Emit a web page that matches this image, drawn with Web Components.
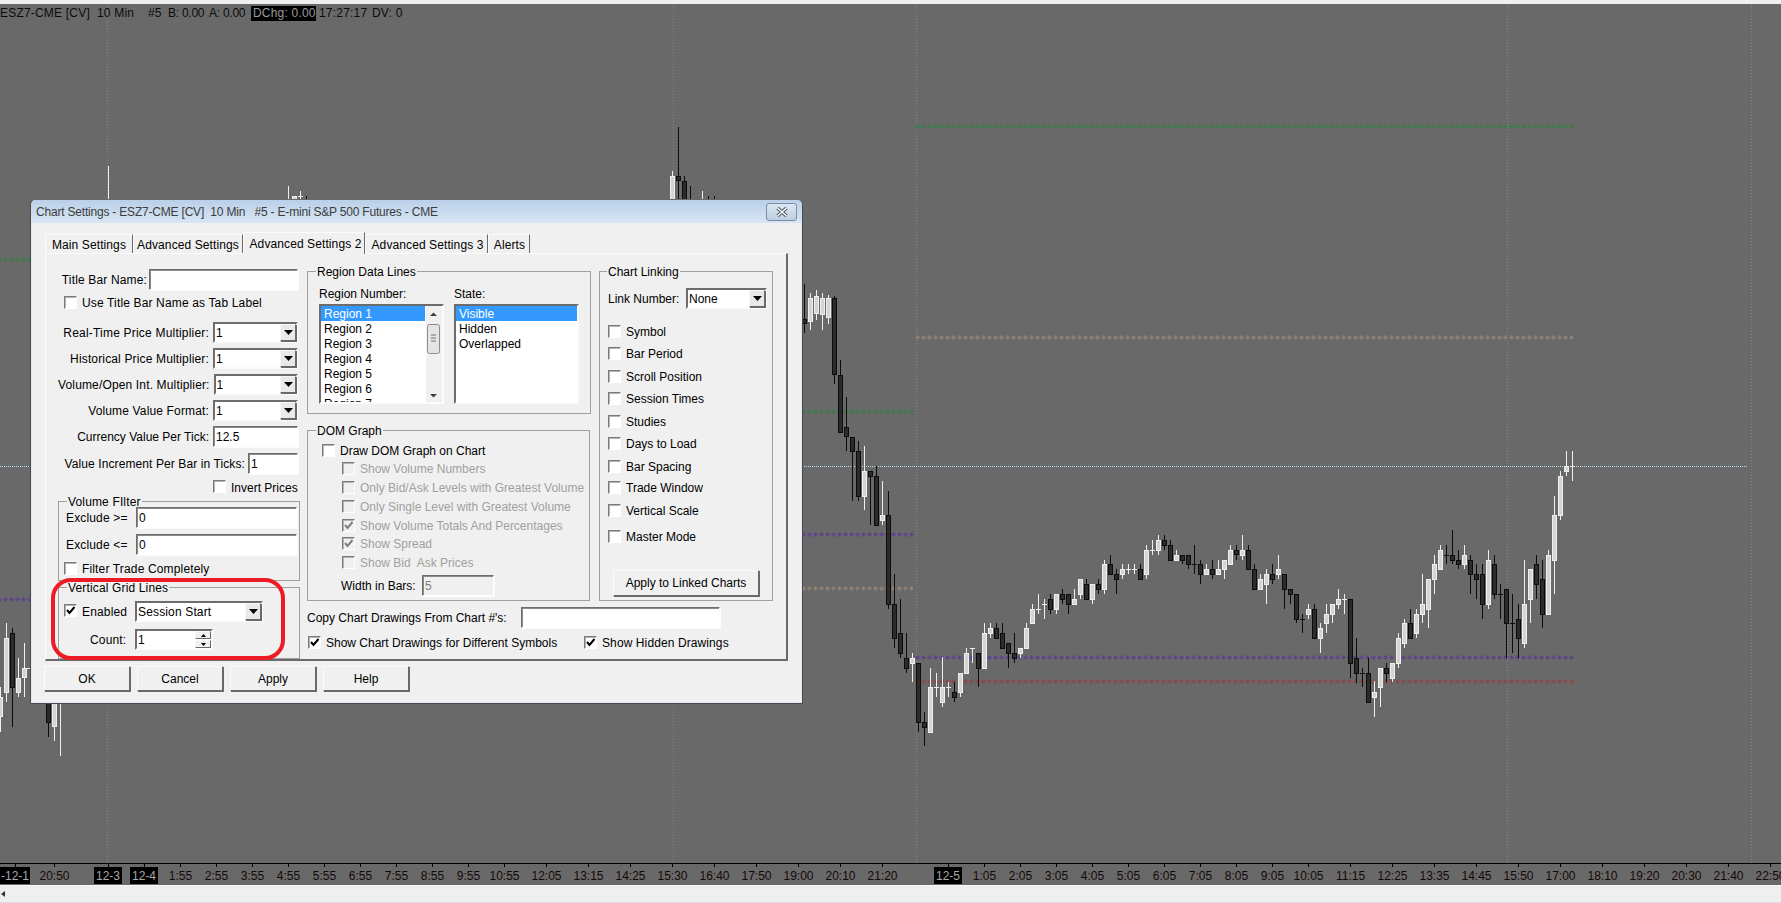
<!DOCTYPE html>
<html lang="en">
<head>
<meta charset="utf-8">
<title>Chart Settings</title>
<style>
  html, body { margin: 0; height: 100%; overflow: hidden; background: #696969; }
</style>
</head>
<body>
<sc-app></sc-app>
<script>
const UI_FONT = '12px/14px "Liberation Sans", Arial, sans-serif'

/**
 * Small helper that makes a shadow root from a html string.
 *
 * @param {HTMLElement} el - The host element.
 * @param {string} html - Markup with styles.
 */
function shadow (el, html) {
  // the hosts use white-space: pre, so the blanks between tags must not become text
  el.attachShadow({ mode: 'open' }).innerHTML = html.trim().replace(/>\s+</g, '><')
}

customElements.define('sc-check', class extends HTMLElement {
  constructor () {
    super()
    const on = this.hasAttribute('checked')
    const off = this.hasAttribute('disabled')
    shadow(this, `
      <style>
        :host { display: flex; align-items: center; height: 14px; color: ${off ? '#a0a0a0' : '#000'}; white-space: pre; }
        .box {
          box-sizing: border-box; flex: none; width: 13px; height: 13px; margin-right: 5px; margin-top: -2px;
          background: ${off ? '#f0f0f0' : '#fff'};
          border: 1px solid; border-color: #7a7a7a #fff #fff #7a7a7a;
          box-shadow: inset 1px 1px 0 #b4b4b4;
        }
        svg { display: block; margin: 1px; }
      </style>
      <span class="box">${on ? `<svg width="10" height="9" viewBox="0 0 10 9"><path d="M1 4l2.5 3L8.500 1" fill="none" stroke="${off ? '#808080' : '#000'}" stroke-width="2"/></svg>` : ''}</span>
      <slot></slot>
    `)
  }
})

customElements.define('sc-input', class extends HTMLElement {
  constructor () {
    super()
    const off = this.hasAttribute('disabled')
    shadow(this, `
      <style>
        :host {
          display: block; box-sizing: border-box; height: 21px; padding: 2px 2px;
          background: ${off ? '#f0f0f0' : '#fff'}; color: ${off ? '#808080' : '#000'};
          border: 1px solid; border-color: #6d6d6d #fff #fff #6d6d6d;
          box-shadow: inset 1px 1px 0 #8a8a8a, 1px 1px 0 #fbfbfb;
          line-height: 16px; white-space: pre; overflow: hidden; letter-spacing: 0;
        }
      </style>
      <slot></slot>
    `)
  }
})

customElements.define('sc-combo', class extends HTMLElement {
  constructor () {
    super()
    shadow(this, `
      <style>
        :host {
          display: flex; box-sizing: border-box; height: 21px; background: #fff;
          border: 2px solid; border-color: #6d6d6d #fbfbfb #fbfbfb #6d6d6d;
          line-height: 18px; white-space: pre;
        }
        .txt { flex: 1; padding-left: 1px; overflow: hidden; }
        .btn {
          box-sizing: border-box; flex: none; width: 16px; display: flex; align-items: center; justify-content: center;
          background: #e9e9e9; border: 1px solid; border-color: #f8f8f8 #696969 #696969 #f8f8f8;
          box-shadow: 1px 1px 0 #696969;
        }
      </style>
      <span class="txt"><slot></slot></span>
      <span class="btn"><svg width="9" height="5" viewBox="0 0 9 5"><path d="M0 0h9L4.500 5z" fill="#000"/></svg></span>
    `)
  }
})

customElements.define('sc-spin', class extends HTMLElement {
  constructor () {
    super()
    shadow(this, `
      <style>
        :host {
          display: flex; box-sizing: border-box; height: 21px; background: #fff;
          border: 2px solid; border-color: #6d6d6d #fbfbfb #fbfbfb #6d6d6d;
          line-height: 18px;
        }
        .txt { flex: 1; padding-left: 1px; }
        .btns { flex: none; width: 16px; display: flex; flex-direction: column; gap: 1px; }
        .btns span {
          box-sizing: border-box; flex: 1; display: flex; align-items: center; justify-content: center;
          background: #efefef; border: 1px solid; border-color: #fafafa #696969 #696969 #fafafa;
        }
      </style>
      <span class="txt"><slot></slot></span>
      <span class="btns">
        <span><svg width="5" height="3" viewBox="0 0 5 3"><path d="M0 3h5L2.500 0z" fill="#000"/></svg></span>
        <span><svg width="5" height="3" viewBox="0 0 5 3"><path d="M0 0h5L2.500 3z" fill="#000"/></svg></span>
      </span>
    `)
  }
})

customElements.define('sc-button', class extends HTMLElement {
  constructor () {
    super()
    shadow(this, `
      <style>
        :host {
          display: flex; align-items: center; justify-content: center; box-sizing: border-box;
          background: #f0f0f0; color: #000; white-space: pre;
          border: 1px solid; border-color: #fbfbfb #696969 #696969 #fbfbfb;
          box-shadow: 1px 1px 0 #696969;
        }
      </style>
      <slot></slot>
    `)
  }
})

customElements.define('sc-group', class extends HTMLElement {
  constructor () {
    super()
    shadow(this, `
      <style>
        :host { display: block; }
        fieldset {
          margin: 0; min-width: 0; box-sizing: border-box; height: 100%;
          padding: var(--pad, 0 0 0 0);
          border: 1px solid #a0a0a0;
        }
        legend {
          padding: 0 1px; margin-left: var(--legend, 8px); line-height: 12px; white-space: pre;
          position: relative; top: 1px;
        }
      </style>
      <fieldset>
        <legend>${this.getAttribute('label')}</legend>
        <slot></slot>
      </fieldset>
    `)
  }
})

customElements.define('sc-listbox', class extends HTMLElement {
  constructor () {
    super()
    const items = this.getAttribute('items').split(',')
    const bar = this.hasAttribute('scroll') ? `
      <div class="bar">
        <svg width="15" height="96" viewBox="0 0 15 96">
          <path d="M4 10h7L7.500 6.500z" fill="#404040"/>
          <rect x="1.500" y="18.500" width="12" height="29" rx="2" fill="#e4e4e4" stroke="#8c8c8c"/>
          <path d="M5 29h5M5 32h5M5 35h5" stroke="#707070"/>
          <path d="M4 88h7L7.500 91.500z" fill="#404040"/>
        </svg>
      </div>` : ''
    shadow(this, `
      <style>
        :host {
          display: flex; box-sizing: border-box; height: 100px; background: #fff;
          border: 2px solid; border-color: #6d6d6d #fbfbfb #fbfbfb #6d6d6d; overflow: hidden;
        }
        .rows { flex: 1; min-width: 0; overflow: hidden; }
        .row { height: 15px; line-height: 17px; padding-left: 3px; white-space: pre; color: #000; }
        .row.sel { background: #3399ff; color: #fff; }
        .bar { flex: none; width: 16px; background: #f0f0f0; border-left: 1px solid #fff; }
        svg { display: block; }
      </style>
      <div class="rows">${items.map((t, i) => `<div class="row${i === 0 ? ' sel' : ''}">${t}</div>`).join('')}</div>
      ${bar}
    `)
  }
})

customElements.define('sc-tab', class extends HTMLElement {
  constructor () {
    super()
    const active = this.hasAttribute('active')
    shadow(this, `
      <style>
        :host {
          display: flex; align-items: center; justify-content: center; box-sizing: border-box; flex: none;
          height: ${active ? 22 : 19}px; padding-top: ${active ? 0 : 2}px; margin-bottom: ${active ? -1 : 0}px;
          background: #f0f0f0; border-top: 1px solid #fbfbfb; border-left: 1px solid #fbfbfb;
          border-right: 1px solid #696969; position: relative; white-space: pre; letter-spacing: 0.1px;
        }
      </style>
      <slot></slot>
    `)
  }
})

customElements.define('sc-titlebar', class extends HTMLElement {
  constructor () {
    super()
    shadow(this, `
      <style>
        :host {
          display: flex; align-items: center; justify-content: space-between; box-sizing: border-box; height: 23px;
          padding: 0 5px; background: linear-gradient(#b9d0e8, #d8e5f3); color: #3c3c3c; white-space: pre;
          border-radius: 5px 5px 0 0; letter-spacing: -0.2px;
        }
        .close {
          box-sizing: border-box; width: 31px; height: 18px; border: 1px solid #7d8ea6; border-radius: 3px;
          background: linear-gradient(#dbe6f1, #bccfe3); display: flex; align-items: center; justify-content: center;
        }
        svg { display: block; }
      </style>
      <slot></slot>
      <span class="close">
        <svg width="12" height="10" viewBox="0 0 12 10">
          <path d="M1.500 1l9 8M10.500 1l-9 8" stroke="#4d5561" stroke-width="3.400"/>
          <path d="M1.500 1l9 8M10.500 1l-9 8" stroke="#f4f6f9" stroke-width="1.600"/>
        </svg>
      </span>
    `)
  }
})

customElements.define('sc-chart-settings', class extends HTMLElement {
  constructor () {
    super()
    shadow(this, `
      <style>
        :host {
          display: flex; flex-direction: column; box-sizing: border-box; position: absolute; left: 30px; top: 199px;
          width: 773px; height: 505px; background: #f0f0f0; border: 1px solid #4c4c4c; border-top-color: #6a6a6a;
          border-radius: 6px 6px 0 0; box-shadow: inset 1px 0 0 #dfe9f5, inset -1px 0 0 #dfe9f5, inset 0 -1px 0 #dfe9f5;
          font: ${UI_FONT}; color: #000;
        }
        .tabs { display: flex; align-items: flex-end; height: 21px; margin: 9px 0 0 14px; }
        .pane {
          display: flex; box-sizing: border-box; width: 743px; height: 408px; margin-left: 14px; padding: 11px 0 0 12px;
          border: 2px solid #696969; border-width: 1px 2px 2px 1px; border-color: #fbfbfb #696969 #696969 #fbfbfb;
        }
        .left { flex: none; width: 242px; padding-top: 4px; letter-spacing: 0.15px; }
        .right { flex: none; width: 466px; margin-left: 7px; }
        .top { display: flex; gap: 8px; height: 336px; }
        .mid { flex: none; width: 284px; }
        .row { display: flex; align-items: center; }
        .row span { white-space: pre; }
        .end { justify-content: flex-end; width: 240px; gap: 4px; }
        .r14 { height: 14px; }
        .r21 { height: 21px; }
        .w85 { width: 85px; }
        .dis { margin-left: 20px; }
        .plain { letter-spacing: 0; }
        .buttons { display: flex; gap: 7px; margin: 5px 0 0 13px; }
        .buttons sc-button { width: 86px; height: 25px; }
        .ring {
          position: absolute; left: 20px; top: 378px; width: 234px; height: 82px; box-sizing: border-box;
          border: 4px solid #ed1c24; border-radius: 20px; pointer-events: none;
        }
      </style>
      <sc-titlebar>Chart Settings - ESZ7-CME [CV]  10 Min   #5 - E-mini S&amp;P 500 Futures - CME</sc-titlebar>
      <div class="tabs">
        <sc-tab style="width:88px">Main Settings</sc-tab>
        <sc-tab style="width:110px">Advanced Settings</sc-tab>
        <sc-tab style="width:122px;padding-left:3px" active>Advanced Settings 2</sc-tab>
        <sc-tab style="width:123px;padding-left:2px">Advanced Settings 3</sc-tab>
        <sc-tab style="width:42px;padding-left:1px">Alerts</sc-tab>
      </div>
      <div class="pane">
        <div class="left">
          <div class="row end r21" style="gap:2px"><span>Title Bar Name:</span><sc-input style="width:149px"></sc-input></div>
          <sc-check style="margin:6px 0 0 6px">Use Title Bar Name as Tab Label</sc-check>
          <div class="row end r21" style="margin-top:12px"><span style="letter-spacing:0.2px">Real-Time Price Multiplier:</span><sc-combo class="w85">1</sc-combo></div>
          <div class="row end r21" style="margin-top:5px"><span>Historical Price Multiplier:</span><sc-combo class="w85">1</sc-combo></div>
          <div class="row end r21" style="margin-top:5px"><span>Volume/Open Int. Multiplier:</span><sc-combo class="w85">1</sc-combo></div>
          <div class="row end r21" style="margin-top:5px"><span>Volume Value Format:</span><sc-combo class="w85">1</sc-combo></div>
          <div class="row end r21" style="margin-top:5px"><span class="plain">Currency Value Per Tick:</span><sc-input class="w85">12.5</sc-input></div>
          <div class="row end r21" style="margin-top:6px;gap:3px"><span style="letter-spacing:0.1px">Value Increment Per Bar in Ticks:</span><sc-input style="width:50px">1</sc-input></div>
          <sc-check class="plain" style="margin:7px 0 0 155px;height:13px">Invert Prices</sc-check>
          <sc-group label="Volume FIlter" style="--pad:0 2px 4px 5px;--legend:3px;height:86px;margin-top:1px">
            <div class="row r21"><span style="width:70px;margin-left:2px">Exclude &gt;=</span><sc-input style="width:161px">0</sc-input></div>
            <div class="row r21" style="margin-top:6px"><span style="width:70px;margin-left:2px">Exclude &lt;=</span><sc-input style="width:161px">0</sc-input></div>
            <sc-check style="margin-top:7px">Filter Trade Completely</sc-check>
          </sc-group>
          <sc-group label="Vertical Grid Lines" style="--pad:8px 2px 8px 5px;--legend:3px;height:78px">
            <div class="row r21"><sc-check checked style="width:71px">Enabled</sc-check><sc-combo style="width:128px">Session Start</sc-combo></div>
            <div class="row r21" style="margin-top:7px"><span style="width:45px;margin-left:26px">Count:</span><sc-spin style="width:78px">1</sc-spin></div>
          </sc-group>
        </div>
        <div class="right">
          <div class="top">
            <div class="mid">
              <sc-group label="Region Data Lines" style="--pad:10px 0 0 11px;--legend:-3px;height:149px">
                <div class="row r14"><span style="width:135px">Region Number:</span><span>State:</span></div>
                <div class="row" style="margin-top:3px;gap:10px">
                  <sc-listbox scroll style="width:125px" items="Region 1,Region 2,Region 3,Region 4,Region 5,Region 6,Region 7"></sc-listbox>
                  <sc-listbox style="width:125px" items="Visible,Hidden,Overlapped"></sc-listbox>
                </div>
              </sc-group>
              <sc-group label="DOM Graph" style="--pad:8px 0 0 14px;--legend:-6px;height:177px;width:283px;margin-top:10px">
                <sc-check>Draw DOM Graph on Chart</sc-check>
                <sc-check class="dis" disabled style="margin-top:4px">Show Volume Numbers</sc-check>
                <sc-check class="dis" disabled style="margin-top:5px">Only Bid/Ask Levels with Greatest Volume</sc-check>
                <sc-check class="dis" disabled style="margin-top:5px">Only Single Level with Greatest Volume</sc-check>
                <sc-check class="dis" disabled checked style="margin-top:5px">Show Volume Totals And Percentages</sc-check>
                <sc-check class="dis" disabled checked style="margin-top:4px">Show Spread</sc-check>
                <sc-check class="dis" disabled style="margin-top:5px">Show Bid  Ask Prices</sc-check>
                <div class="row r21" style="margin-top:5px"><span style="width:81px;margin-left:19px">Width in Bars:</span><sc-input disabled style="width:72px">5</sc-input></div>
              </sc-group>
            </div>
            <sc-group label="Chart Linking" style="--pad:11px 0 0 8px;--legend:-1px;width:174px;height:336px">
              <div class="row r21"><span style="width:78px">Link Number:</span><sc-combo style="width:81px">None</sc-combo></div>
              <sc-check style="margin-top:16px">Symbol</sc-check>
              <sc-check style="margin-top:8px">Bar Period</sc-check>
              <sc-check style="margin-top:9px">Scroll Position</sc-check>
              <sc-check style="margin-top:8px">Session Times</sc-check>
              <sc-check style="margin-top:9px">Studies</sc-check>
              <sc-check style="margin-top:8px">Days to Load</sc-check>
              <sc-check style="margin-top:9px">Bar Spacing</sc-check>
              <sc-check style="margin-top:7px">Trade Window</sc-check>
              <sc-check style="margin-top:9px">Vertical Scale</sc-check>
              <sc-check style="margin-top:12px">Master Mode</sc-check>
              <sc-button style="width:146px;height:26px;margin:26px 0 0 5px">Apply to Linked Charts</sc-button>
            </sc-group>
          </div>
          <div class="row r21" style="margin-top:6px"><span style="width:214px">Copy Chart Drawings From Chart #'s:</span><sc-input style="width:199px"></sc-input></div>
          <div class="row r14" style="margin:8px 0 0 1px">
            <sc-check checked style="width:276px">Show Chart Drawings for Different Symbols</sc-check>
            <sc-check checked style="letter-spacing:0.1px">Show Hidden Drawings</sc-check>
          </div>
        </div>
      </div>
      <div class="buttons">
        <sc-button>OK</sc-button>
        <sc-button>Cancel</sc-button>
        <sc-button>Apply</sc-button>
        <sc-button>Help</sc-button>
      </div>
      <div class="ring"></div>
    `)
  }
})

// kind, wick top, body top, body bottom, wick bottom. y values are 3x from y=400, a flat body is a doji
const BARS_840 = [
  ['d', -120, -75, 98, 98], ['d', -10, 82, 112, 153], ['d', 112, 112, 155, 302], ['d', 124, 154, 290, 302], ['l', 138, 213, 290, 330],
  ['d', 213, 214, 230, 375], ['d', 198, 229, 377, 377], ['l', 243, 346, 362, 375], ['d', 273, 346, 614, 627], ['d', 522, 613, 716, 744],
  ['d', 597, 700, 761, 774], ['d', 699, 775, 806, 819], ['l', 759, 775, 791, 846], ['d', 790, 790, 968, 996], ['d', 936, 967, 983, 1038],
  ['l', 804, 862, 998, 998], ['l', 819, 862, 862, 891], ['l', 772, 862, 908, 921], ['l', 847, 862, 862, 891], ['d', 847, 877, 893, 906],
  ['l', 820, 820, 878, 891], ['l', 744, 760, 821, 821], ['l', 744, 744, 744, 789], ['d', 760, 760, 806, 861], ['l', 670, 700, 806, 806],
  ['l', 670, 685, 701, 714], ['d', 670, 685, 716, 716], ['d', 670, 700, 746, 746], ['d', 730, 730, 761, 804], ['d', 699, 760, 776, 789],
  ['l', 745, 745, 761, 775], ['l', 670, 685, 746, 746], ['l', 613, 628, 671, 671], ['l', 583, 628, 628, 642], ['l', 598, 613, 613, 657],
  ['d', 583, 598, 629, 642], ['l', 583, 583, 629, 642], ['d', 568, 583, 599, 612], ['d', 583, 583, 614, 642], ['l', 568, 598, 614, 614],
  ['l', 538, 538, 584, 597], ['d', 538, 553, 599, 599], ['l', 553, 553, 599, 612], ['d', 538, 553, 569, 582], ['l', 481, 493, 569, 582],
  ['d', 465, 493, 524, 524], ['d', 508, 523, 539, 582], ['l', 493, 508, 524, 537], ['l', 493, 508, 508, 522], ['l', 493, 508, 508, 522],
  ['d', 493, 508, 539, 539], ['l', 435, 450, 524, 537], ['l', 420, 451, 451, 465], ['l', 405, 420, 452, 465], ['d', 405, 420, 437, 450],
  ['d', 420, 435, 482, 482], ['l', 450, 465, 482, 482], ['d', 465, 465, 482, 492], ['d', 465, 465, 494, 507], ['d', 435, 493, 493, 522],
  ['d', 480, 493, 524, 552], ['l', 492, 507, 524, 524], ['d', 480, 507, 524, 537], ['l', 480, 507, 524, 524], ['l', 480, 481, 509, 537],
  ['l', 435, 450, 494, 494], ['d', 435, 450, 466, 480], ['l', 405, 450, 467, 480], ['d', 435, 450, 509, 509], ['d', 492, 508, 569, 569],
  ['l', 522, 538, 569, 569], ['l', 507, 523, 554, 612], ['d', 492, 523, 539, 552], ['l', 465, 508, 524, 537], ['d', 523, 523, 569, 627],
  ['d', 567, 568, 584, 612], ['d', 582, 583, 659, 669], ['d', 643, 658, 658, 698], ['l', 612, 628, 644, 657], ['d', 612, 628, 716, 716],
  ['l', 670, 685, 716, 759], ['l', 612, 643, 671, 699], ['l', 612, 613, 644, 669], ['l', 567, 598, 614, 627], ['l', 582, 598, 598, 642],
  ['d', 598, 598, 791, 834], ['d', 714, 775, 821, 848], ['d', 804, 820, 820, 861], ['d', 774, 820, 908, 908], ['l', 844, 877, 893, 951],
  ['l', 804, 805, 864, 921], ['d', 789, 805, 821, 846], ['l', 789, 790, 836, 846], ['l', 700, 715, 791, 804], ['l', 657, 670, 732, 744],
  ['d', 627, 670, 716, 716], ['l', 627, 643, 701, 714], ['l', 522, 613, 644, 669], ['l', 538, 538, 629, 684], ['l', 465, 493, 539, 582],
  ['l', 435, 451, 509, 509], ['d', 435, 466, 466, 492], ['d', 391, 466, 482, 492], ['d', 450, 481, 494, 507], ['l', 435, 466, 494, 507],
  ['d', 465, 481, 524, 582], ['d', 492, 523, 539, 597], ['d', 492, 523, 614, 657], ['l', 450, 481, 614, 627], ['d', 465, 493, 584, 597],
  ['d', 552, 583, 583, 657], ['d', 568, 568, 671, 775], ['d', 582, 670, 670, 759], ['d', 612, 658, 716, 775], ['l', 480, 613, 732, 744],
  ['l', 507, 508, 600, 669], ['d', 465, 493, 554, 597], ['d', 480, 538, 644, 684], ['l', 450, 466, 644, 644], ['l', 288, 346, 482, 582],
  ['l', 213, 229, 347, 360], ['l', 153, 199, 215, 228], ['l', 153, 199, 199, 243]
]

// x, kind, wick top, body top, body bottom, wick bottom, in page pixels
const BARS_OTHER = [
  [0, 'l', 687, 697, 717, 732], [6, 'l', 623, 638, 693, 702], [12, 'd', 628, 633, 688, 727], [18, 'l', 658, 678, 693, 697],
  [24, 'l', 643, 668, 678, 697], [27, 'l', 668, 668, 668, 668], [48, 'd', 690, 695, 723, 737], [54, 'l', 690, 695, 727, 741],
  [60, 'l', 690, 690, 700, 756], [108, 'l', 166, 205, 240, 260], [288, 'l', 186, 210, 230, 240], [294, 'l', 196, 196, 210, 230],
  [300, 'l', 191, 196, 196, 220], [306, 'd', 196, 210, 230, 240], [672, 'l', 171, 176, 260, 270], [678, 'd', 127, 176, 181, 210],
  [684, 'd', 176, 181, 240, 250], [690, 'd', 186, 210, 230, 240], [702, 'l', 191, 210, 230, 240], [708, 'd', 196, 210, 230, 240],
  [714, 'd', 196, 210, 230, 240], [804, 'd', 284, 319, 324, 333], [810, 'l', 293, 298, 322, 330], [816, 'l', 290, 296, 314, 320],
  [822, 'l', 293, 298, 315, 330], [828, 'l', 295, 298, 318, 324], [834, 'd', 296, 298, 375, 384]
]

// diamond series: y, from x, to x, colour
const SERIES = [
  [126, 917, 1573, '#3f7a4c'], [337, 917, 1573, '#8a8076'], [259, 0, 30, '#3f7a4c'], [599, 0, 30, '#5e4688'],
  [411, 803, 915, '#3f7a4c'], [534, 803, 915, '#5e4688'], [588, 803, 915, '#8a8076'],
  [657, 917, 1573, '#5e4688'], [681, 921, 1573, '#8a4a4a']
]

const AXIS = [
  ['20:50', 54], ['1:55', 180], ['2:55', 216], ['3:55', 252], ['4:55', 288], ['5:55', 324], ['6:55', 360], ['7:55', 396], ['8:55', 432],
  ['9:55', 468], ['10:55', 504], ['12:05', 546], ['13:15', 588], ['14:25', 630], ['15:30', 672], ['16:40', 714], ['17:50', 756], ['19:00', 798],
  ['20:10', 840], ['21:20', 882], ['1:05', 984], ['2:05', 1020], ['3:05', 1056], ['4:05', 1092], ['5:05', 1128], ['6:05', 1164], ['7:05', 1200],
  ['8:05', 1236], ['9:05', 1272], ['10:05', 1308], ['11:15', 1350], ['12:25', 1392], ['13:35', 1434], ['14:45', 1476], ['15:50', 1518],
  ['17:00', 1560], ['18:10', 1602], ['19:20', 1644], ['20:30', 1686], ['21:40', 1728], ['22:50', 1770]
]
const DATES = [['-12-1', 0, 30], ['12-3', 94, 28], ['12-4', 130, 28], ['12-5', 934, 28]]

/**
 * Draws one candle as crisp rects.
 *
 * @param {number} x - Pixel column of the wick.
 * @param {string} kind - d for a down bar, l for an up bar.
 * @param {number} wt - Wick top.
 * @param {number} bt - Body top.
 * @param {number} bb - Body bottom.
 * @param {number} wb - Wick bottom.
 * @returns {string} Svg markup.
 */
function candle (x, kind, wt, bt, bb, wb) {
  const line = kind === 'd' ? '#0c0c0c' : '#efefef'
  const fill = kind === 'd' ? '#2b2b2b' : '#d4d4d4'
  let out = `<rect x="${x}" y="${wt}" width="1" height="${Math.max(wb - wt, 1)}" fill="${line}"/>`
  if (bb === bt) {
    out += `<rect x="${x - 2}" y="${bt}" width="5" height="1" fill="${line}"/>`
  } else {
    out += `<rect x="${x - 2}" y="${bt}" width="5" height="${bb - bt}" fill="${line}"/>`
    out += `<rect x="${x - 1}" y="${bt + 1}" width="3" height="${Math.max(bb - bt - 2, 0)}" fill="${fill}"/>`
  }
  return out
}

customElements.define('sc-chart', class extends HTMLElement {
  constructor () {
    super()
    let art = ''
    for (const x of [107, 673, 916, 1507, 1751]) {
      art += `<line x1="${x + 0.5}" y1="4" x2="${x + 0.5}" y2="863" stroke="#858585" stroke-dasharray="1 2"/>`
    }
    art += '<line x1="0" y1="466.5" x2="1747" y2="466.5" stroke="#b4e2f0" stroke-dasharray="1 1"/>'
    for (const [y, from, to, color] of SERIES) {
      for (let x = from - ((from - 5) % 6 + 6) % 6; x <= to; x += 6) {
        const cx = x + 0.5
        const cy = y + 0.5
        art += `<path d="M${cx - 2.5} ${cy}L${cx} ${cy - 2.5}L${cx + 2.5} ${cy}L${cx} ${cy + 2.5}z" fill="${color}"/>`
      }
    }
    for (const b of BARS_OTHER) art += candle(...b)
    BARS_840.forEach((b, i) => {
      const y = b.slice(1).map(v => 400 + Math.round(v / 3))
      art += candle(840 + i * 6, b[0], ...y)
    })
    art += '<rect x="0" y="863" width="1781" height="1" fill="#000"/>'
    for (const [label, x] of AXIS) {
      art += `<rect x="${x}" y="864" width="1" height="3" fill="#000"/>`
      art += `<text x="${x + 0.5}" y="880" text-anchor="middle">${label}</text>`
    }
    for (const [label, x, w] of DATES) {
      art += `<rect x="${x}" y="867" width="${w}" height="17" fill="#000"/>`
      art += `<rect x="${x + w / 2}" y="864" width="1" height="3" fill="#000"/>`
      art += `<text x="${x + w / 2}" y="880" text-anchor="middle" fill="#a8a8a8">${label}</text>`
    }
    shadow(this, `
      <style>
        :host { display: block; position: relative; flex: 1; background: #696969; overflow: hidden; }
        svg { position: absolute; left: 0; top: 0; display: block; }
        text { font: 12px "Liberation Sans", Arial, sans-serif; fill: #140808; }
        text[fill] { fill: #a8a8a8; }
      </style>
      <svg width="1781" height="881" viewBox="0 4 1781 881">${art}</svg>
      <slot></slot>
    `)
  }
})

customElements.define('sc-chart-header', class extends HTMLElement {
  constructor () {
    super()
    shadow(this, `
      <style>
        :host {
          display: flex; position: relative; height: 15px; margin-top: 2px; white-space: pre; color: #0c0c0c;
          font: 12px/15px "Liberation Sans", Arial, sans-serif; letter-spacing: 0.2px;
        }
        .tight { letter-spacing: -0.25px; }
        .hi { box-sizing: border-box; width: 65px; margin-right: 3px; padding-left: 2px; background: #000; color: #9a9a9a; }
      </style>
      <span style="width:97px">ESZ7-CME [CV]</span>
      <span style="width:51px">10 Min</span>
      <span style="width:20px">#5</span>
      <span class="tight" style="width:41px">B: 0.00</span>
      <span class="tight" style="width:42px">A: 0.00</span>
      <span class="hi">DChg: 0.00</span>
      <span style="width:53px">17:27:17</span>
      <span>DV: 0</span>
    `)
  }
})

customElements.define('sc-statusbar', class extends HTMLElement {
  constructor () {
    super()
    shadow(this, `
      <style>
        :host {
          display: flex; align-items: center; box-sizing: border-box; height: 18px; padding-left: 1px;
          background: #efefef; border-top: 1px solid #f8f8f8; border-bottom: 1px solid #dcdcdc;
        }
        svg { display: block; }
      </style>
      <svg width="4" height="6" viewBox="0 0 4 6"><path d="M4 0v6L0 3z" fill="#333"/></svg>
    `)
  }
})

customElements.define('sc-app', class extends HTMLElement {
  constructor () {
    super()
    shadow(this, `
      <style>
        :host { display: flex; flex-direction: column; width: 1781px; height: 903px; position: relative; }
        .strip { height: 4px; background: #efefef; flex: none; }
      </style>
      <div class="strip"></div>
      <sc-chart><sc-chart-header></sc-chart-header></sc-chart>
      <sc-statusbar></sc-statusbar>
      <sc-chart-settings></sc-chart-settings>
    `)
  }
})
</script>
</body>
</html>
